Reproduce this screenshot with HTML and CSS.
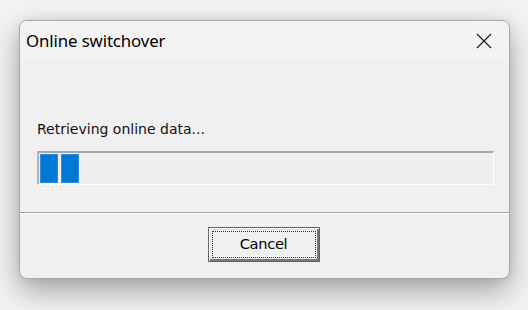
FILE: index.html
```html
<!DOCTYPE html>
<html>
<head>
<meta charset="utf-8">
<link rel="stylesheet" href="styles.css">
</head>
<body>
<div class="window">
  <div class="titlebar">
    <span class="title">Online switchover</span>
    <svg class="close" width="16" height="16" viewBox="0 0 16 16"><path d="M1 1 L15 15 M15 1 L1 15" stroke="#1a1a1a" stroke-width="1.2" fill="none"/></svg>
  </div>
  <div class="content">
    <div class="label">Retrieving online data...</div>
    <div class="progress">
      <span class="block"></span>
      <span class="block"></span>
    </div>
  </div>
  <div class="separator"></div>
  <div class="footer">
    <button class="btn"><span class="focus">Cancel</span></button>
  </div>
</div>
</body>
</html>
```
FILE: styles.css
```css
html, body {
  margin: 0;
  padding: 0;
}
body {
  width: 528px;
  height: 310px;
  background: #f2f2f2;
  padding: 20px 0 0 19px;
  box-sizing: border-box;
  overflow: hidden;
}
.window {
  width: 491px;
  height: 259px;
  box-sizing: border-box;
  border: 1px solid #a9a9a9;
  border-radius: 8px;
  background: #f0f0f0;
  box-shadow: 0 12px 28px rgba(0,0,0,0.32), 0 0 10px rgba(0,0,0,0.08);
  display: flex;
  flex-direction: column;
  overflow: hidden;
}
.titlebar {
  height: 39px;
  background: #f3f3f3;
  display: flex;
  align-items: center;
  justify-content: space-between;
  padding: 0 17px 0 6px;
  flex-shrink: 0;
}
.title {
  font-family: "Noto Sans", "Open Sans", sans-serif;
  font-size: 16.8px;
  color: #000;
  margin-top: -1px;
  letter-spacing: -0.1px;
}
.close {
  display: block;
}
.content {
  padding: 60px 14px 0 17px;
  height: 152px;
  box-sizing: border-box;
  flex-shrink: 0;
}
.label {
  font-family: "DejaVu Sans", "Liberation Sans", sans-serif;
  font-size: 14px;
  color: #111;
  line-height: 18px;
  letter-spacing: 0;
}
.progress {
  margin-top: 13px;
  width: 457px;
  height: 34px;
  box-sizing: border-box;
  border-top: 2px solid #a8a8a8;
  border-left: 2px solid #b4b4b4;
  border-bottom: 1px solid #ffffff;
  border-right: 1px solid #ffffff;
  background: #efefef;
  display: flex;
  gap: 3px;
  padding: 1px 0 0 1px;
}
.block {
  width: 18px;
  height: 29px;
  background: #0078d7;
  box-shadow: inset 0 0 0 1px #2b8ee0;
}
.separator {
  height: 1px;
  background: #a0a0a0;
  border-bottom: 1px solid #ffffff;
  flex-shrink: 0;
}
.footer {
  display: flex;
  justify-content: center;
  padding-top: 13px;
  padding-right: 2px;
}
.btn {
  width: 112px;
  height: 35px;
  box-sizing: border-box;
  background: #f0f0f0;
  border: 1px solid #646464;
  box-shadow: inset 1px 1px 0 #ffffff, inset -2px -2px 0 #7a7a7a, inset 2px 2px 0 #e3e3e3;
  padding: 3px;
  font-family: "DejaVu Sans", "Liberation Sans", sans-serif;
  font-size: 14.6px;
  color: #000;
  display: flex;
  margin: 0;
}
.focus {
  flex: 1;
  border: 1px dotted #333;
  display: flex;
  align-items: center;
  justify-content: center;
  letter-spacing: -0.3px;
  padding-bottom: 2px;
}
```
